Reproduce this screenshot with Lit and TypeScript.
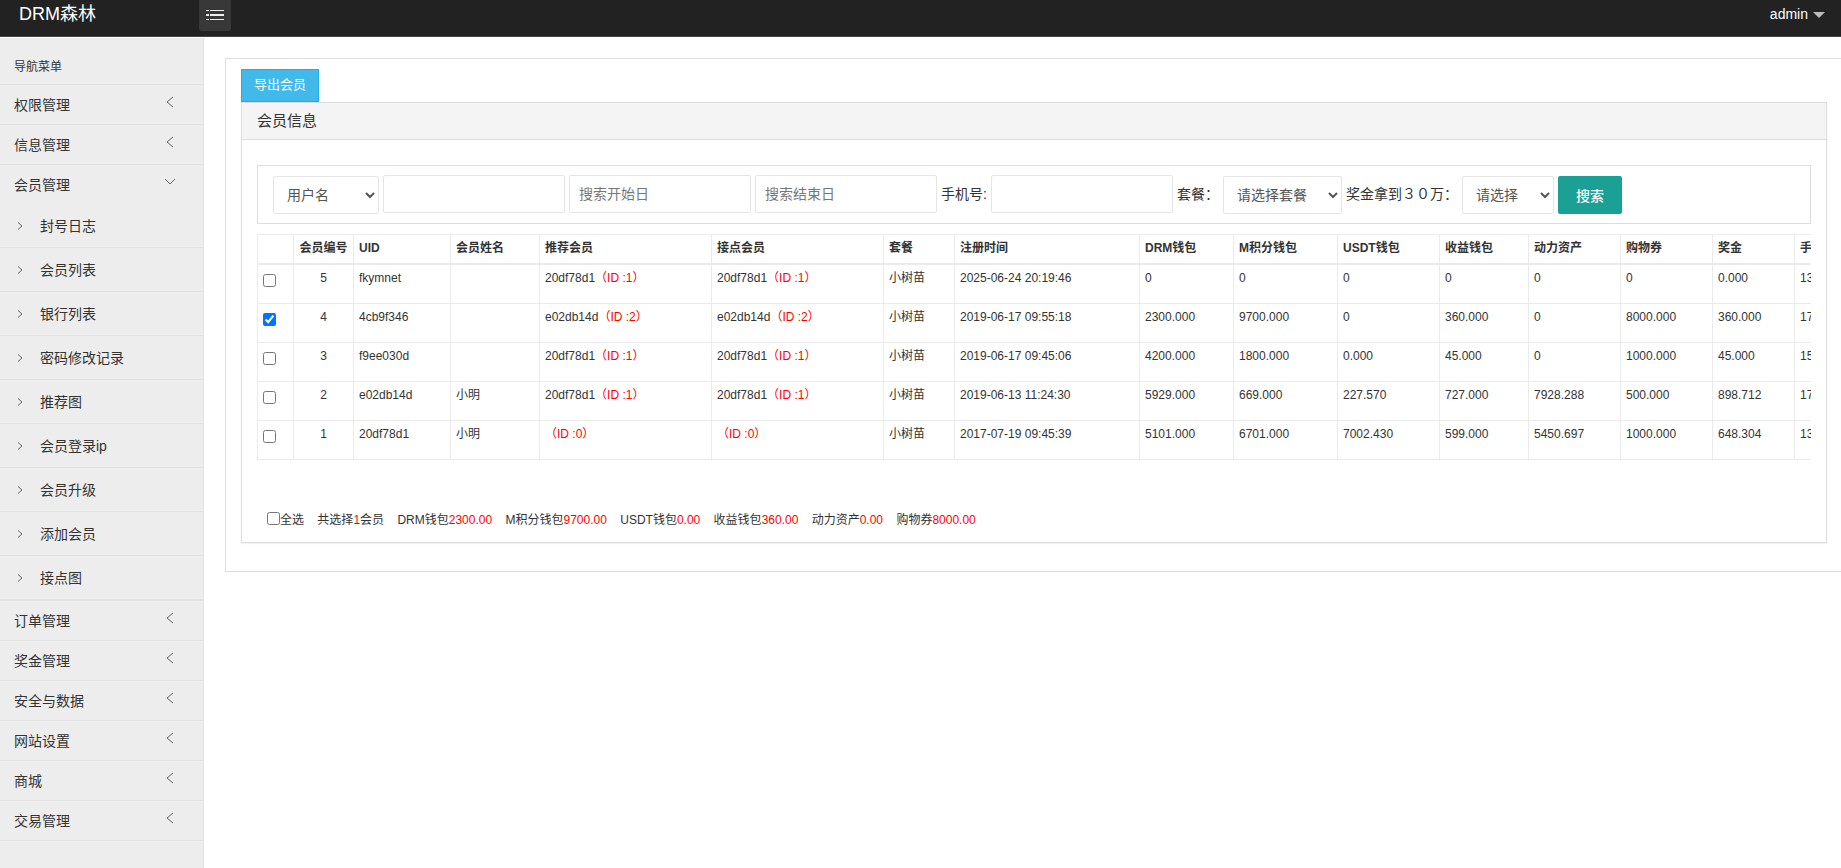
import { LitElement, html, css, svg } from "lit";
import { customElement, state } from "lit/decorators.js";

interface Member {
  id: number;
  uid: string;
  name: string;
  referrer: string;
  parentId: number;
  date: string;
  amounts: string[];
  phone: string;
}

interface MenuGroup {
  label: string;
  children?: string[];
}

const MENU: MenuGroup[] = [
  { label: "权限管理" },
  { label: "信息管理" },
  {
    label: "会员管理",
    children: ["封号日志", "会员列表", "银行列表", "密码修改记录", "推荐图", "会员登录ip", "会员升级", "添加会员", "接点图"],
  },
  { label: "订单管理" },
  { label: "奖金管理" },
  { label: "安全与数据" },
  { label: "网站设置" },
  { label: "商城" },
  { label: "交易管理" },
];

const COLUMNS = ["", "会员编号", "UID", "会员姓名", "推荐会员", "接点会员", "套餐", "注册时间", "DRM钱包", "M积分钱包", "USDT钱包", "收益钱包", "动力资产", "购物券", "奖金", "手机号"];
const COLUMN_WIDTHS = [36, 60, 97, 89, 172, 172, 71, 185, 94, 104, 102, 89, 92, 92, 82, 120];

const MEMBERS: Member[] = [
  { id: 5, uid: "fkymnet", name: "", referrer: "20df78d1", parentId: 1, date: "2025-06-24 20:19:46", amounts: ["0", "0", "0", "0", "0", "0", "0.000"], phone: "13" },
  { id: 4, uid: "4cb9f346", name: "", referrer: "e02db14d", parentId: 2, date: "2019-06-17 09:55:18", amounts: ["2300.000", "9700.000", "0", "360.000", "0", "8000.000", "360.000"], phone: "17" },
  { id: 3, uid: "f9ee030d", name: "", referrer: "20df78d1", parentId: 1, date: "2019-06-17 09:45:06", amounts: ["4200.000", "1800.000", "0.000", "45.000", "0", "1000.000", "45.000"], phone: "15" },
  { id: 2, uid: "e02db14d", name: "小明", referrer: "20df78d1", parentId: 1, date: "2019-06-13 11:24:30", amounts: ["5929.000", "669.000", "227.570", "727.000", "7928.288", "500.000", "898.712"], phone: "17" },
  { id: 1, uid: "20df78d1", name: "小明", referrer: "", parentId: 0, date: "2017-07-19 09:45:39", amounts: ["5101.000", "6701.000", "7002.430", "599.000", "5450.697", "1000.000", "648.304"], phone: "13" },
];

const TOTALS = ["DRM钱包", "M积分钱包", "USDT钱包", "收益钱包", "动力资产", "购物券"];
const GAP = "\u00a0".repeat(4);

const base = css`
  :host {
    font-family: "Liberation Sans", "Noto Sans CJK SC", sans-serif;
    color: #333;
  }
  * {
    box-sizing: border-box;
  }
  button,
  input,
  select {
    font-family: inherit;
  }
`;

@customElement("top-bar")
class TopBar extends LitElement {
  static styles = [
    base,
    css`
      :host {
        display: flex;
        align-items: flex-start;
        height: 37px;
        background: #222;
        border-bottom: 1px solid #444;
      }
      .brand {
        width: 199px;
        padding-left: 19px;
        font-size: 18px;
        line-height: 28px;
        color: #fff;
        text-decoration: none;
      }
      .toggle {
        display: grid;
        place-items: center;
        width: 32px;
        height: 31px;
        padding: 0 0 1px;
        border: 0;
        border-radius: 0 0 3px 3px;
        background: #383838;
      }
      .user {
        display: flex;
        align-items: center;
        gap: 5px;
        margin-left: auto;
        margin-right: 16px;
        padding: 0;
        border: 0;
        background: none;
        font-size: 14px;
        line-height: 28px;
        color: #fff;
      }
      .caret {
        border: 6px solid transparent;
        border-top-color: #bbb;
        border-bottom: 0;
        margin-top: 2px;
      }
    `,
  ];

  render() {
    return html`
      <a class="brand" href="#">DRM森林</a>
      <button class="toggle" type="button" aria-label="菜单">
        <svg width="18" height="10" viewBox="0 0 18 10" fill="#eee" shape-rendering="crispEdges">
          <path d="M0 0h3v1h-3zM4 0h14v1h-14zM0 4h3v2h-3zM4 4h14v2h-14zM0 9h3v1h-3zM4 9h14v1h-14z" />
        </svg>
      </button>
      <button class="user" type="button">admin<span class="caret"></span></button>
    `;
  }
}

@customElement("side-menu")
class SideMenu extends LitElement {
  static styles = [
    base,
    css`
      :host {
        display: block;
        width: 204px;
        flex: none;
        background: #ededed;
        border-right: 1px solid #e2e2e2;
        font-size: 14px;
      }
      .title {
        margin: 0;
        padding: 12px 14px 0;
        height: 47px;
        border-bottom: 1px solid #e2e2e2;
        font-size: 12px;
        font-weight: 400;
        line-height: 34px;
      }
      .list {
        list-style: none;
        margin: 0;
        padding: 0;
      }
      .item {
        display: block;
      }
      .link {
        display: flex;
        align-items: center;
        justify-content: space-between;
        padding: 0 27px 2px 14px;
        height: 40px;
        border-bottom: 1px solid #e2e2e2;
        color: #333;
        text-decoration: none;
      }
      .link.open {
        height: 39px;
        border-bottom: 0;
      }
      .arrow {
        margin-bottom: 3px;
      }
      .sub {
        border-bottom: 1px solid #e2e2e2;
      }
      .sublink {
        display: flex;
        align-items: center;
        gap: 17px;
        height: 44px;
        padding: 0 0 2px 17px;
        border-bottom: 1px solid #e2e2e2;
        color: #333;
        text-decoration: none;
      }
      .bullet {
        margin-top: 2px;
      }
    `,
  ];

  private arrow(open: boolean) {
    const d = open ? svg`<path d="M1 3l5 5 5-5" />` : svg`<path d="M9 1l-6 5 6 5" />`;
    return html`<svg class="arrow" width="12" height="12" viewBox="0 0 12 12" fill="none" stroke="#666">${d}</svg>`;
  }

  render() {
    return html`
      <nav>
        <h2 class="title">导航菜单</h2>
        <ul class="list">
          ${MENU.map(
            (group) => html`
              <li class="item">
                <a class="link ${group.children ? "open" : ""}" href="#"><span>${group.label}</span>${this.arrow(!!group.children)}</a>
                ${group.children
                  ? html`<ul class="list sub">
                      ${group.children.map(
                        (child) => html`<li class="item">
                          <a class="sublink" href="#">
                            <svg class="bullet" width="6" height="8" viewBox="0 0 6 8" fill="none" stroke="#666"><path d="M1 0.500l4 3.500-4 3.500" /></svg>
                            <span>${child}</span>
                          </a>
                        </li>`
                      )}
                    </ul>`
                  : ""}
              </li>
            `
          )}
        </ul>
      </nav>
    `;
  }
}

@customElement("search-form")
class SearchForm extends LitElement {
  static styles = [
    base,
    css`
      :host {
        display: block;
        border: 1px solid #ddd;
      }
      .form {
        display: flex;
        flex-wrap: wrap;
        align-items: center;
        gap: 4px;
        padding: 9px 15px;
        font-size: 14px;
      }
      .label {
        margin-bottom: 3px;
      }
      .field {
        width: 182px;
        height: 38px;
        padding: 0 9px;
        border: 1px solid #e5e5e5;
        border-radius: 2px;
        font-size: 14px;
        color: #555;
        background: #fff;
        margin-bottom: 1px;
      }
      .field::placeholder {
        color: #777;
      }
      .pick {
        height: 38px;
        padding: 0 0 0 9px;
        border: 1px solid #e5e5e5;
        border-radius: 2px;
        font-size: 14px;
        color: #555;
        background: #fff;
        margin-top: 1px;
      }
      .kind {
        width: 106px;
      }
      .plan {
        width: 119px;
      }
      .bonus {
        width: 92px;
      }
      .submit {
        width: 64px;
        height: 38px;
        margin-top: 1px;
        padding: 0;
        border: 0;
        border-radius: 2px;
        background: #1aa094;
        color: #fff;
        font-size: 14px;
        font-weight: 500;
      }
    `,
  ];

  render() {
    return html`
      <form class="form">
        <select class="pick kind" aria-label="搜索类型"><option>用户名</option></select>
        <input class="field" type="text" aria-label="关键字" />
        <input class="field" type="text" aria-label="搜索开始日" placeholder="搜索开始日" />
        <input class="field" type="text" aria-label="搜索结束日" placeholder="搜索结束日" />
        <label class="label" for="phone">手机号:</label>
        <input class="field" id="phone" type="text" />
        <label class="label" for="plan">套餐：</label>
        <select class="pick plan" id="plan"><option>请选择套餐</option></select>
        <label class="label" for="bonus">奖金拿到３０万：</label>
        <select class="pick bonus" id="bonus"><option>请选择</option></select>
        <button class="submit" type="button">搜索</button>
      </form>
    `;
  }
}

@customElement("member-table")
class MemberTable extends LitElement {
  @state() private selected = new Set<number>([4]);

  static styles = [
    base,
    css`
      :host {
        display: block;
        font-size: 12px;
        line-height: 17px;
      }
      .scroller {
        overflow: hidden;
      }
      .table {
        table-layout: fixed;
        border-collapse: collapse;
      }
      .cell {
        height: 39px;
        padding: 5px;
        border: 1px solid #ebebeb;
        text-align: left;
        vertical-align: top;
        white-space: nowrap;
      }
      .head {
        height: 29px;
        border-bottom-width: 2px;
        font-weight: 700;
      }
      .row:first-child .cell {
        height: 40px;
      }
      .center {
        text-align: center;
      }
      .box {
        display: block;
        width: 13px;
        height: 13px;
        margin: 4px 0 0;
      }
      .red {
        color: #f00;
      }
      .summary {
        padding: 52px 10px 13px;
      }
      .all {
        display: inline-flex;
        vertical-align: top;
      }
      .all .box {
        margin: 0;
      }
    `,
  ];

  private toggle(id: number) {
    const next = new Set(this.selected);
    if (!next.delete(id)) next.add(id);
    this.selected = next;
  }

  private toggleAll() {
    this.selected = this.selected.size === MEMBERS.length ? new Set() : new Set(MEMBERS.map((m) => m.id));
  }

  private total(column: number) {
    return MEMBERS.filter((m) => this.selected.has(m.id))
      .reduce((sum, m) => sum + Number(m.amounts[column]), 0)
      .toFixed(2);
  }

  render() {
    const width = COLUMN_WIDTHS.reduce((a, b) => a + b, 0);
    return html`
      <div class="scroller">
        <table class="table" style="width:${width}px">
          <colgroup>
            ${COLUMN_WIDTHS.map((w) => html`<col style="width:${w}px" />`)}
          </colgroup>
          <thead>
            <tr>
              ${COLUMNS.map((c, i) => html`<th class="cell head ${i === 1 ? "center" : ""}">${c}</th>`)}
            </tr>
          </thead>
          <tbody>
            ${MEMBERS.map((m) => {
              const link = html`${m.referrer}<span class="red">（ID :${m.parentId}）</span>`;
              return html`<tr class="row">
                <td class="cell">
                  <input class="box" type="checkbox" aria-label=${m.uid} .checked=${this.selected.has(m.id)} @change=${() => this.toggle(m.id)} />
                </td>
                <td class="cell center">${m.id}</td>
                <td class="cell">${m.uid}</td>
                <td class="cell">${m.name}</td>
                <td class="cell">${link}</td>
                <td class="cell">${link}</td>
                <td class="cell">小树苗</td>
                <td class="cell">${m.date}</td>
                ${m.amounts.map((a) => html`<td class="cell">${a}</td>`)}
                <td class="cell">${m.phone}</td>
              </tr>`;
            })}
          </tbody>
        </table>
      </div>
      <div class="summary">
        <label class="all"><input class="box" type="checkbox" .checked=${this.selected.size === MEMBERS.length} @change=${this.toggleAll} />全选</label>${GAP}<span>共选择<span class="red">${this.selected.size}</span>会员</span>${TOTALS.map((label, i) => html`${GAP}<span>${label}<span class="red">${this.total(i)}</span></span>`)}
      </div>
    `;
  }
}

@customElement("app-root")
class AppRoot extends LitElement {
  static styles = [
    base,
    css`
      :host {
        display: flex;
        flex-direction: column;
        min-height: 100vh;
        background: #fff;
      }
      .body {
        display: flex;
        flex: 1;
        padding-top: 1px;
      }
      .main {
        flex: 1;
        min-width: 0;
        padding: 20px 0 0 21px;
      }
      .frame {
        padding: 10px 14px 28px 15px;
        border: 1px solid #ddd;
        border-right: 0;
      }
      .export {
        display: block;
        width: 78px;
        height: 33px;
        padding: 0 0 5px;
        border: 1px solid #23ade5;
        background: #41b9ea;
        color: #fff;
        font-size: 13px;
      }
      .panel {
        border: 1px solid #ddd;
        box-shadow: 0 1px 1px rgba(0, 0, 0, 0.05);
      }
      .heading {
        margin: 0;
        padding: 0 15px;
        height: 37px;
        border-bottom: 1px solid #ddd;
        background: #f4f4f4;
        font-size: 15px;
        font-weight: 400;
        line-height: 36px;
      }
      .content {
        display: grid;
        gap: 10px;
        padding: 25px 15px 0;
      }
      .content > * {
        min-width: 0;
      }
    `,
  ];

  render() {
    return html`
      <top-bar></top-bar>
      <div class="body">
        <side-menu></side-menu>
        <main class="main">
          <div class="frame">
            <button class="export" type="button">导出会员</button>
            <section class="panel">
              <h1 class="heading">会员信息</h1>
              <div class="content">
                <search-form></search-form>
                <member-table></member-table>
              </div>
            </section>
          </div>
        </main>
      </div>
    `;
  }
}
